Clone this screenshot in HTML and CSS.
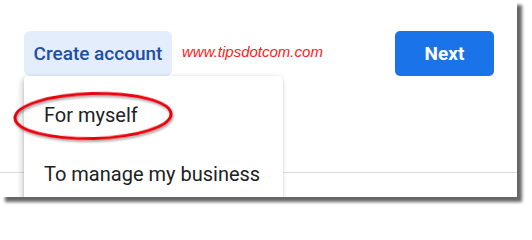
FILE: index.html
```html
<!DOCTYPE html>
<html>
<head>
<meta charset="utf-8">
<link rel="stylesheet" href="styles.css">
</head>
<body>
<div class="shot">
  <div class="toprow">
    <button class="btn-create">Create account</button>
    <span class="watermark">www.tipsdotcom.com</span>
    <button class="btn-next">Next</button>
  </div>
  <div class="rule"></div>
  <div class="menu">
    <div class="item item-first">For myself</div>
    <div class="item item-second">To manage my business</div>
  </div>
  <svg class="ring" width="180" height="60" viewBox="0 0 180 60">
    <defs>
      <filter id="sh" x="-10%" y="-20%" width="120%" height="150%">
        <feDropShadow dx="1" dy="2" stdDeviation="1.2" flood-color="#000" flood-opacity="0.35"/>
      </filter>
    </defs>
    <ellipse cx="84" cy="29" rx="78" ry="22.5" fill="none" stroke="#e8000b" stroke-width="3" filter="url(#sh)" transform="rotate(-1.5 84 29)"/>
  </svg>
</div>
</body>
</html>
```
FILE: styles.css
```css
html, body {
  margin: 0;
  padding: 0;
  background: #ffffff;
}
body {
  width: 532px;
  height: 213px;
  overflow: hidden;
}
.shot {
  position: relative;
  width: 517px;
  height: 197px;
  background: #ffffff;
  overflow: hidden;
  box-shadow: 5px 5px 3px rgba(0, 0, 0, 0.6);
}
.toprow {
  display: flex;
  align-items: center;
  padding: 31px 0 0 24px;
  height: 44px;
}
button {
  border: none;
  margin: 0;
  padding: 0;
  cursor: pointer;
}
.btn-create {
  width: 148px;
  height: 45px;
  border-radius: 6px;
  background: #e4edfc;
  color: #1b4fa6;
  font-family: Roboto, "Liberation Sans", sans-serif;
  font-weight: 500;
  font-size: 19px;
  letter-spacing: 0;
}
.watermark {
  margin-left: 10px;
  margin-top: -3px;
  width: 213px;
  color: #ff1a1a;
  font-family: "Liberation Sans", Arial, sans-serif;
  font-style: italic;
  font-size: 15px;
}
.btn-next {
  width: 99px;
  height: 45px;
  border-radius: 5px;
  background: #1a73e8;
  color: #ffffff;
  font-family: Roboto, "Liberation Sans", sans-serif;
  font-weight: 700;
  font-size: 19px;
}
.rule {
  margin-top: 97px;
  height: 1px;
  background: #dadce0;
}
.menu {
  position: absolute;
  left: 24px;
  top: 76px;
  width: 259px;
  height: 160px;
  background: #ffffff;
  border-radius: 4px;
  box-shadow: -2px 2px 6px rgba(0, 0, 0, 0.18), 0 1px 3px rgba(0, 0, 0, 0.12);
}
.item {
  padding-left: 20px;
  font-family: Roboto, "Liberation Sans", sans-serif;
  font-size: 20px;
  color: #202124;
  line-height: 24px;
}
.item-first {
  margin-top: 27px;
}
.item-second {
  margin-top: 35px;
}
.ring {
  position: absolute;
  left: 9px;
  top: 87px;
}
```
